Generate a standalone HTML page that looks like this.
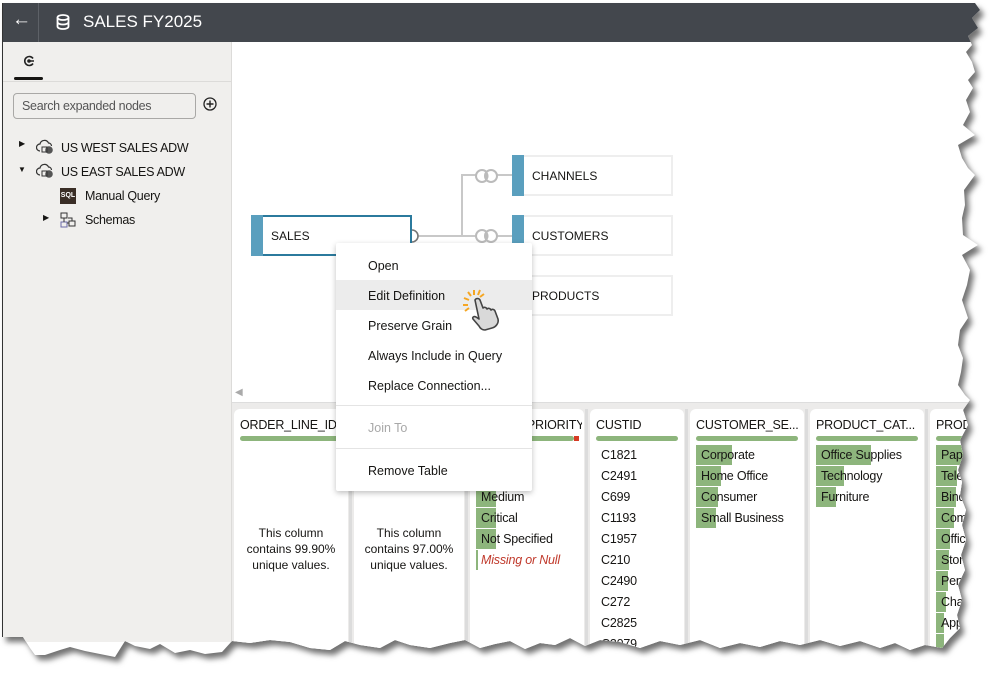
<!DOCTYPE html>
<html><head><meta charset="utf-8"><style>
*{box-sizing:border-box;margin:0;padding:0}
body{width:1002px;height:683px;background:#fff;position:relative;overflow:hidden;font-family:"Liberation Sans",sans-serif;color:#161513}
#wrap{position:absolute;left:0;top:0;width:1002px;height:683px;filter:drop-shadow(4px 5px 3px rgba(0,0,0,.55))}
#page{position:absolute;left:0;top:0;width:1002px;height:683px;background:#fff;
clip-path:polygon(2px 3px,975px 3px,980px 10px,972px 18px,978px 28px,968px 36px,972px 45px,966px 52px,972px 62px,975px 72px,968px 80px,973px 88px,966px 100px,970px 112px,963px 125px,975px 135px,958px 145px,962px 158px,968px 168px,975px 175px,964px 190px,965px 205px,962px 218px,963px 235px,978px 245px,962px 255px,970px 270px,967px 285px,962px 300px,968px 318px,960px 330px,958px 345px,963px 358px,961px 372px,958px 385px,965px 395px,970px 400px,963px 410px,968px 425px,960px 440px,963px 455px,958px 470px,962px 482px,960px 495px,966px 510px,962px 525px,966px 540px,961px 555px,965px 570px,958px 585px,962px 600px,957px 615px,960px 628px,950px 638px,942px 648px,925px 645px,910px 650px,895px 643px,880px 648px,860px 641px,840px 646px,820px 640px,800px 645px,780px 641px,760px 647px,740px 643px,720px 648px,700px 640px,680px 645px,660px 641px,640px 648px,620px 642px,600px 640px,585px 646px,570px 638px,555px 645px,540px 643px,525px 649px,510px 641px,495px 644px,480px 648px,465px 640px,450px 643px,430px 648px,410px 645px,395px 640px,380px 648px,360px 645px,345px 641px,330px 650px,310px 648px,290px 642px,270px 640px,250px 643px,232px 641px,222px 652px,205px 654px,190px 650px,175px 653px,160px 644px,150px 649px,135px 646px,125px 641px,115px 657px,100px 654px,85px 651px,70px 647px,60px 650px,45px 655px,35px 655px,30px 648px,23px 637px,2px 637px);
}
#frame{position:absolute;left:2px;top:3px;width:1px;height:634px;background:#333}
.hdr{position:absolute;left:3px;top:3px;width:1000px;height:39px;background:#43474d}
.lp{position:absolute;left:3px;top:42px;width:229px;height:600px;background:#f0efed;border-right:1px solid #dcdbd9}
.t{position:absolute;white-space:nowrap;font-size:13px}
.lp .t{letter-spacing:-0.3px}
.node{position:absolute;height:41px;width:161px;background:#fff;border:2px solid #eeeeee}
.node .bar{position:absolute;left:-2px;top:-2px;bottom:-2px;width:12px;background:#5a9fbe}
.node span{position:absolute;left:18px;top:12px;font-size:12px}
.bot{position:absolute;left:232px;top:402px;width:770px;height:260px;background:#ecebea;border-top:1px solid #ddd}
.card{position:absolute;top:409px;height:260px;background:#fff;border-radius:6px 6px 0 0;overflow:hidden}
.card .h{position:absolute;left:6px;right:2px;top:9px;font-size:12.5px;white-space:nowrap;overflow:hidden;letter-spacing:-0.2px}
.card .g{position:absolute;left:6px;right:6px;top:27px;height:5px;border-radius:3px;background:#8db57c}
.row{position:absolute;left:6px;font-size:12.5px;height:20px;line-height:20px;padding-left:5px;white-space:nowrap;letter-spacing:-0.2px}
.row i{position:absolute;left:0;top:0;height:20px;background:#8db57c;z-index:0}
.row b{position:relative;font-weight:normal;z-index:1}
.menu{position:absolute;left:336px;top:243px;width:196px;height:248px;background:#fff;box-shadow:0 2px 6px rgba(0,0,0,.25);border-radius:2px}
.menu .m{position:absolute;left:32px;font-size:12.5px}
.sep{position:absolute;left:0;right:0;height:1px;background:#e4e4e4}
</style></head><body>
<div id="wrap"><div id="page">
<div class="hdr">
  <div class="t" style="left:9px;top:6px;color:#fff;font-size:19px">&#8592;</div>
  <div style="position:absolute;left:35px;top:0;width:1px;height:39px;background:#5d6167"></div>
  <svg style="position:absolute;left:53px;top:11px" width="14" height="16" viewBox="0 0 14 16"><ellipse cx="7" cy="3.5" rx="5.5" ry="2.5" fill="none" stroke="#fff" stroke-width="1.8"/><path d="M1.5 3.5v9c0 1.4 2.5 2.5 5.5 2.5s5.5-1.1 5.5-2.5v-9M1.5 8c0 1.4 2.5 2.5 5.5 2.5s5.5-1.1 5.5-2.5" fill="none" stroke="#fff" stroke-width="1.8"/></svg>
  <div class="t" style="left:80px;top:9px;color:#fff;font-size:17px">SALES FY2025</div>
</div>
<div class="lp">
  <svg style="position:absolute;left:20px;top:13px" width="12" height="12" viewBox="0 0 12 12"><path d="M10 3.5A4.5 4.5 0 1 0 10 8.5" fill="none" stroke="#222" stroke-width="1.6"/><circle cx="6" cy="6" r="1.8" fill="#222"/><path d="M6 6h5" stroke="#222" stroke-width="1.4"/></svg>
  <div style="position:absolute;left:11px;top:35px;width:29px;height:3px;background:#161513;border-radius:2px"></div>
  <div style="position:absolute;left:0;top:39px;width:229px;height:1px;background:#dcdbd9"></div>
  <div style="position:absolute;left:10px;top:51px;width:183px;height:26px;border:1px solid #a9a8a6;border-radius:4px;background:#f0efed"></div>
  <div class="t" style="left:19px;top:57px;color:#555;font-size:12.5px">Search expanded nodes</div>
  <svg style="position:absolute;left:200px;top:55px" width="14" height="14" viewBox="0 0 14 14"><circle cx="7" cy="7" r="6" fill="none" stroke="#222" stroke-width="1.3"/><path d="M7 3.5v7M3.5 7h7" stroke="#222" stroke-width="1.4"/></svg>
  <div class="t" style="left:16px;top:97px;font-size:8px">&#9654;</div>
  <div class="t" style="left:15px;top:123px;font-size:8px">&#9660;</div>
  <svg style="position:absolute;left:33px;top:97px" width="20" height="16" viewBox="0 0 20 16"><path d="M4 12a3.5 3.5 0 0 1 0-7 4.5 4.5 0 0 1 8.5-1 3 3 0 0 1 3 3" fill="none" stroke="#333" stroke-width="1.2"/><circle cx="13" cy="11" r="3.8" fill="#555"/><rect x="6" y="8" width="5" height="5" fill="none" stroke="#333"/></svg>
  <svg style="position:absolute;left:33px;top:121px" width="20" height="16" viewBox="0 0 20 16"><path d="M4 12a3.5 3.5 0 0 1 0-7 4.5 4.5 0 0 1 8.5-1 3 3 0 0 1 3 3" fill="none" stroke="#333" stroke-width="1.2"/><circle cx="13" cy="11" r="3.8" fill="#555"/><rect x="6" y="8" width="5" height="5" fill="none" stroke="#333"/></svg>
  <div class="t" style="left:58px;top:99px;font-size:12.5px">US WEST SALES ADW</div>
  <div class="t" style="left:58px;top:123px;font-size:12.5px">US EAST SALES ADW</div>
  <div style="position:absolute;left:57px;top:146px;width:16px;height:16px;background:#3a2e26;color:#fff;font-size:7px;line-height:16px;text-align:center;font-weight:bold">SQL</div>
  <div class="t" style="left:82px;top:147px;font-size:12.5px">Manual Query</div>
  <div class="t" style="left:40px;top:171px;font-size:8px">&#9654;</div>
  <svg style="position:absolute;left:57px;top:170px" width="16" height="16" viewBox="0 0 16 16"><rect x="1" y="1" width="6" height="5" fill="none" stroke="#333"/><rect x="9" y="9" width="6" height="5" fill="none" stroke="#333"/><rect x="1" y="10" width="6" height="5" fill="none" stroke="#6a6aa8"/><path d="M4 6v4M7 11h2M8 6h4v3" fill="none" stroke="#333"/></svg>
  <div class="t" style="left:82px;top:171px;font-size:12.5px">Schemas</div>
</div>

<svg style="position:absolute;left:400px;top:160px" width="120" height="100" viewBox="400 160 120 100">
<path d="M418 236H512M462 236V175H512" stroke="#c8c8c8" stroke-width="2" fill="none"/>
<circle cx="412" cy="236" r="6" fill="#fff" stroke="#777" stroke-width="1.6"/>
<g fill="#fff" stroke="#bbb" stroke-width="2"><circle cx="482" cy="176" r="6"/><circle cx="491" cy="176" r="6"/><circle cx="482" cy="236" r="6"/><circle cx="491" cy="236" r="6"/></g>
<path d="M486.5 171.5a6 6 0 0 1 0 9 6 6 0 0 1 0-9zM486.5 231.5a6 6 0 0 1 0 9 6 6 0 0 1 0-9z" fill="#bbb"/>
</svg>
<div class="node" style="left:251px;top:215px;border-color:#2b7a9d"><div class="bar" style="width:12px"></div><span>SALES</span></div>
<div class="node" style="left:512px;top:155px"><div class="bar"></div><span>CHANNELS</span></div>
<div class="node" style="left:512px;top:215px"><div class="bar"></div><span>CUSTOMERS</span></div>
<div class="node" style="left:512px;top:275px"><div class="bar"></div><span>PRODUCTS</span></div>
<div class="t" style="left:235px;top:387px;color:#aaa;font-size:10px">&#9664;</div>

<div class="bot"></div>
<div class="card" style="left:234px;width:114px"><div class="h">ORDER_LINE_ID</div><div class="g"></div>
<div style="position:absolute;left:0;right:0;top:116px;text-align:center;font-size:12px;line-height:16px">This column<br>contains 99.90%<br>unique values.</div></div>
<div style="position:absolute;left:349px;top:409px;width:3px;height:250px;background:#dcdcdc"></div>
<div class="card" style="left:354px;width:110px"><div class="g"></div>
<div style="position:absolute;left:0;right:0;top:116px;text-align:center;font-size:12px;line-height:16px">This column<br>contains 97.00%<br>unique values.</div></div>
<div style="position:absolute;left:465px;top:409px;width:3px;height:250px;background:#dcdcdc"></div>
<div class="card" style="left:470px;width:114px"><div class="h">ORDER_PRIORITY</div><div class="g" style="right:10px"></div><div style="position:absolute;left:104px;top:27px;width:5px;height:5px;background:#d63b25"></div>
<div class="row" style="top:78px"><i style="width:20px"></i><b>Medium</b></div>
<div class="row" style="top:99px"><i style="width:20px"></i><b>Critical</b></div>
<div class="row" style="top:120px"><i style="width:20px"></i><b>Not Specified</b></div>
<div class="row" style="top:141px;color:#c0392b;font-style:italic"><i style="width:2px"></i><b>Missing or Null</b></div>
</div>
<div class="card" style="left:590px;width:94px"><div class="h">CUSTID</div><div class="g"></div>
<div class="row" style="top:36px;left:6px">C1821</div><div class="row" style="top:57px;left:6px">C2491</div><div class="row" style="top:78px;left:6px">C699</div><div class="row" style="top:99px;left:6px">C1193</div><div class="row" style="top:120px;left:6px">C1957</div><div class="row" style="top:141px;left:6px">C210</div><div class="row" style="top:162px;left:6px">C2490</div><div class="row" style="top:183px;left:6px">C272</div><div class="row" style="top:204px;left:6px">C2825</div><div class="row" style="top:225px;left:6px">C3079</div></div>
<div class="card" style="left:690px;width:114px"><div class="h">CUSTOMER_SE...</div><div class="g"></div>
<div class="row" style="top:36px"><i style="width:36px"></i><b>Corporate</b></div>
<div class="row" style="top:57px"><i style="width:25px"></i><b>Home Office</b></div>
<div class="row" style="top:78px"><i style="width:22px"></i><b>Consumer</b></div>
<div class="row" style="top:99px"><i style="width:20px"></i><b>Small Business</b></div></div>
<div class="card" style="left:810px;width:114px"><div class="h">PRODUCT_CAT...</div><div class="g"></div>
<div class="row" style="top:36px"><i style="width:55px"></i><b>Office Supplies</b></div>
<div class="row" style="top:57px"><i style="width:28px"></i><b>Technology</b></div>
<div class="row" style="top:78px"><i style="width:20px"></i><b>Furniture</b></div></div>
<div class="card" style="left:930px;width:114px"><div class="h">PRODUCT_SUB</div><div class="g"></div>
<div class="row" style="top:36px"><i style="width:27px"></i><b>Paper</b></div>
<div class="row" style="top:57px"><i style="width:21px"></i><b>Telephones</b></div>
<div class="row" style="top:78px"><i style="width:20px"></i><b>Binders</b></div>
<div class="row" style="top:99px"><i style="width:18px"></i><b>Computers</b></div>
<div class="row" style="top:120px"><i style="width:14px"></i><b>Office</b></div>
<div class="row" style="top:141px"><i style="width:13px"></i><b>Storage</b></div>
<div class="row" style="top:162px"><i style="width:12px"></i><b>Pens</b></div>
<div class="row" style="top:183px"><i style="width:10px"></i><b>Chairs</b></div>
<div class="row" style="top:204px"><i style="width:8px"></i><b>Appliances</b></div>
<div class="row" style="top:225px"><i style="width:8px"></i><b></b></div></div>
<div style="position:absolute;left:585px;top:409px;width:3px;height:250px;background:#dcdcdc"></div>
<div style="position:absolute;left:685px;top:409px;width:3px;height:250px;background:#dcdcdc"></div>
<div style="position:absolute;left:805px;top:409px;width:3px;height:250px;background:#dcdcdc"></div>
<div style="position:absolute;left:925px;top:409px;width:3px;height:250px;background:#dcdcdc"></div>

<div class="menu">
  <div style="position:absolute;left:0;right:0;top:37px;height:30px;background:#ececec"></div>
  <div class="m" style="top:16px">Open</div>
  <div class="m" style="top:46px">Edit Definition</div>
  <div class="m" style="top:76px">Preserve Grain</div>
  <div class="m" style="top:106px">Always Include in Query</div>
  <div class="m" style="top:136px">Replace Connection...</div>
  <div class="sep" style="top:162px"></div>
  <div class="m" style="top:178px;color:#a8a8a8">Join To</div>
  <div class="sep" style="top:205px"></div>
  <div class="m" style="top:221px">Remove Table</div>
</div>
<svg style="position:absolute;left:462px;top:287px" width="50" height="45" viewBox="0 0 50 45">
<g stroke="#f5a623" stroke-width="2"><path d="M12 3v5M18 3l-2 5M6 5l3 4M2 11l5 2M1 18h5M22 7l-4 3M3 24l4-3"/></g>
<path d="M13 13c1-2 4-2 5 0l3 8c1-1 3-1 4 1 1-1 3-1 4 1 1-1 3-1 4 1l3 8c1 4-2 8-6 9l-7 2c-3 0-5-2-6-4l-6-7c-1-2 1-3 3-2l3 2z" fill="#d9d9d9" stroke="#444" stroke-width="1.6" stroke-linejoin="round"/>
</svg>
<div id="frame"></div>
</div></div>
</body></html>
